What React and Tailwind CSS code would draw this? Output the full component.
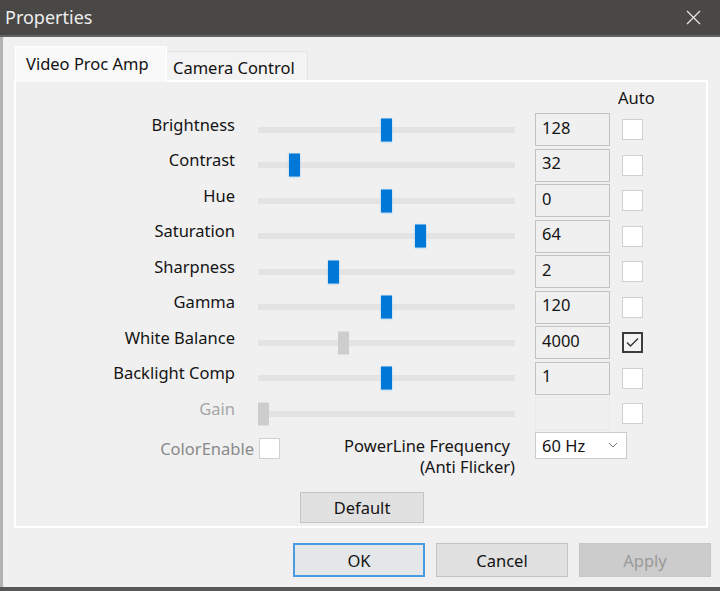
import React from "react";

const rows = [
  { label: "Brightness", value: "128", pos: 0.5 },
  { label: "Contrast", value: "32", pos: 0.126 },
  { label: "Hue", value: "0", pos: 0.5 },
  { label: "Saturation", value: "64", pos: 0.638 },
  { label: "Sharpness", value: "2", pos: 0.285 },
  { label: "Gamma", value: "120", pos: 0.5 },
  { label: "White Balance", value: "4000", pos: 0.325, auto: true, locked: true },
  { label: "Backlight Comp", value: "1", pos: 0.5 },
  { label: "Gain", value: "", pos: 0, disabled: true },
];

function Slider({ pos, gray }) {
  return (
    <div className="relative ml-[23px] flex h-full w-[257px] items-center">
      <div className="h-[6px] w-full bg-[#e3e3e3]" />
      <div
        className={`absolute top-1/2 h-[23px] w-[11px] -translate-y-1/2 ${
          gray ? "bg-[#cdcdcd]" : "bg-[#0078d7] shadow-[0_0_2px_#9cc9f0]"
        }`}
        style={{ left: `${pos * 246}px` }}
      />
    </div>
  );
}

function CheckBox({ checked }) {
  return (
    <div
      className={`flex h-[21px] w-[21px] items-center justify-center ${
        checked ? "border-2 border-[#3c3c3c] bg-[#f4f4f4]" : "border border-[#d0d0d0] bg-white"
      }`}
    >
      {checked && (
        <svg width="13" height="11" viewBox="0 0 13 11" fill="none">
          <path d="M1 5.5 L4.5 9 L12 1.5" stroke="#333" strokeWidth="1.4" />
        </svg>
      )}
    </div>
  );
}

function PropRow({ label, value, pos, auto, locked, disabled }) {
  return (
    <div className="flex h-[35.5px] items-center">
      <div
        className={`w-[219px] pb-[11px] text-right ${disabled ? "text-[#a6a6a6]" : "text-[#141414]"}`}
      >
        {label}
      </div>
      <Slider pos={pos} gray={locked || disabled} />
      <div
        className={`ml-[20px] flex h-[33px] w-[75px] items-center pb-[5px] pl-[6px] text-[#141414] ${
          disabled ? "border border-[#e9e9e9]" : "border border-[#c2c2c2]"
        } bg-[#f0f0f0]`}
      >
        {value}
      </div>
      <div className="ml-[12px]">
        <CheckBox checked={auto} />
      </div>
    </div>
  );
}

export default function App() {
  return (
    <div className="flex h-[591px] w-[720px] flex-col bg-[#f0f0f0] font-['Noto_Sans',sans-serif] text-[16.5px] leading-[21px]">
      {/* title bar */}
      <div className="flex h-[37px] items-center justify-between border-b-2 border-[#626060] bg-[#4a4846] pl-[5px] pr-[19px]">
        <span className="text-[18px] text-[#eeeeee]">Properties</span>
        <svg width="15" height="15" viewBox="0 0 15 15">
          <path d="M1 1 L14 14 M14 1 L1 14" stroke="#e6e6e6" strokeWidth="1.3" />
        </svg>
      </div>

      <div className="flex flex-1 flex-col border-l-[3px] border-[#b3b3b3] pl-[11px] pt-[9px]">
        {/* tabs */}
        <div className="flex items-end">
          <div className="relative z-10 -mb-[2px] ml-[1px] flex h-[36px] w-[152px] items-center border-x border-t border-white bg-[#f9f9f9] pb-[3px] pl-[10px] text-[#111]">
            Video Proc Amp
          </div>
          <div className="flex h-[29px] w-[141px] items-center border-r border-t border-[#e4e4e4] bg-[#f3f3f3] pl-[6px] pt-[2px] text-[#111]">
            Camera Control
          </div>
        </div>

        {/* tab page */}
        <div className="flex h-[448px] w-[694px] flex-col border-2 border-white">
          <div className="flex h-[30px] items-center">
            <span className="ml-[602px] pt-[1px] text-[#141414]">Auto</span>
          </div>
          {rows.map((r) => (
            <PropRow key={r.label} {...r} />
          ))}

          <div className="flex h-[46px] items-start">
            <div className="w-[238px] pt-[6px] text-right text-[#8a8a8a]">ColorEnable</div>
            <div className="ml-[5px] mt-[6px]">
              <CheckBox />
            </div>
            <div className="w-[235px] pt-[3px] text-right text-[#141414]">
              <div className="mr-[5px]">PowerLine Frequency</div>
              <div>(Anti Flicker)</div>
            </div>
            <div className="ml-[20px] flex h-[27px] w-[92px] items-center justify-between border border-[#cbcbcb] bg-white pl-[6px] pr-[8px] text-[#141414]">
              <span>60 Hz</span>
              <svg width="10" height="6" viewBox="0 0 10 6" fill="none">
                <path d="M1 1 L5 5 L9 1" stroke="#7a7a7a" strokeWidth="1" />
              </svg>
            </div>
          </div>

          <button className="ml-[284px] mt-[14px] flex h-[31px] w-[124px] items-center justify-center border border-[#c4c4c4] bg-[#e1e1e1] text-[#141414]">
            Default
          </button>
        </div>

        {/* dialog buttons */}
        <div className="mt-[15px] flex justify-end gap-[11px] pr-[9px]">
          <button className="flex h-[34px] w-[132px] items-center justify-center border-2 border-[#4a9be0] bg-[#e4e7ea] text-[#141414]">
            OK
          </button>
          <button className="flex h-[34px] w-[132px] items-center justify-center border border-[#c4c4c4] bg-[#e1e1e1] text-[#141414]">
            Cancel
          </button>
          <button className="flex h-[34px] w-[132px] items-center justify-center border border-[#c6c6c6] bg-[#cccccc] text-[#9a9a9a]">
            Apply
          </button>
        </div>
      </div>

      <div className="h-[4px] bg-[#5a5856]" />
    </div>
  );
}
